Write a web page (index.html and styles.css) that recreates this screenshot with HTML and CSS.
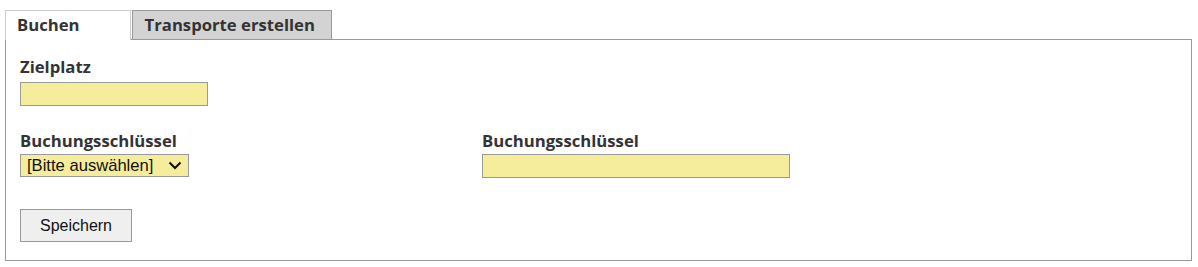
FILE: index.html
```html
<!DOCTYPE html>
<html>
<head>
    <title>Buchen</title>
    <link rel="stylesheet" href="styles.css">
</head>
<body>
    <div id="tab_container">
        <ul class="tabs">
            <li class="tab active">Buchen</li>
            <li class="tab">Transporte erstellen</li>
        </ul>

        <div class="tab_panel">
            <div class="field">
                <label>Zielplatz</label>
                <input type="text" class="input_short" />
            </div>

            <div class="field_row">
                <div class="field">
                    <label>Buchungsschlüssel</label>
                    <div class="select_box">
                        <span>[Bitte auswählen]</span>
                        <svg width="14" height="9" viewBox="0 0 14 9"><path d="M1.5 1.5 L7 7 L12.5 1.5" fill="none" stroke="#111" stroke-width="2"/></svg>
                    </div>
                </div>
                <div class="field">
                    <label>Buchungsschlüssel</label>
                    <input type="text" class="input_long" />
                </div>
            </div>

            <button class="btn">Speichern</button>
        </div>
    </div>
</body>
</html>
```

FILE: styles.css
```css
body {
    margin:0;
    background:#fff;
    font-family:"Open Sans", "Noto Sans", sans-serif;
    color:#333;
}

#tab_container {
    padding:10px 6px 7px 5px;
}

.tabs {
    display:flex;
    margin:0;
    padding:0;
    list-style:none;
}

.tab {
    height:28px;
    padding:0 16px 0 12px;
    margin-right:1px;
    border:1px solid #999;
    border-bottom:none;
    background:#d3d3d3;
    font-weight:700;
    font-size:16.7px;
    line-height:28px;
}

.tab.active {
    height:29px;
    margin-bottom:-1px;
    position:relative;
    z-index:1;
    padding:0 50px 0 11px;
    border-color:#ccc;
    background:#fff;
}

.tab_panel {
    border:1px solid #999;
    padding:14px 14px 18px 14px;
}

.field label {
    display:block;
    font-weight:700;
    font-size:16.7px;
    line-height:26px;
}

.field .input_short {
    margin-top:2px;
}

.field_row {
    display:flex;
    margin-top:22px;
}

.field_row .field:first-child {
    width:462px;
}

input {
    display:block;
    margin:0;
    height:24px;
    box-sizing:border-box;
    border:1px solid #999;
    background:#f5ed9b;
}

.input_short {
    width:188px;
}

.input_long {
    width:308px;
}

.select_box {
    display:flex;
    align-items:center;
    justify-content:space-between;
    box-sizing:border-box;
    width:169px;
    height:23px;
    padding:0 6px 0 6px;
    border:1px solid #999;
    background:#f5ed9b;
    font-family:"Liberation Sans", Arial, sans-serif;
    font-size:16.6px;
    color:#111;
}

.btn {
    display:block;
    margin-top:31px;
    width:112px;
    height:33px;
    border:1px solid #999;
    background:#efefef;
    font-family:"Liberation Sans", Arial, sans-serif;
    font-size:16px;
    color:#111;
}
```
